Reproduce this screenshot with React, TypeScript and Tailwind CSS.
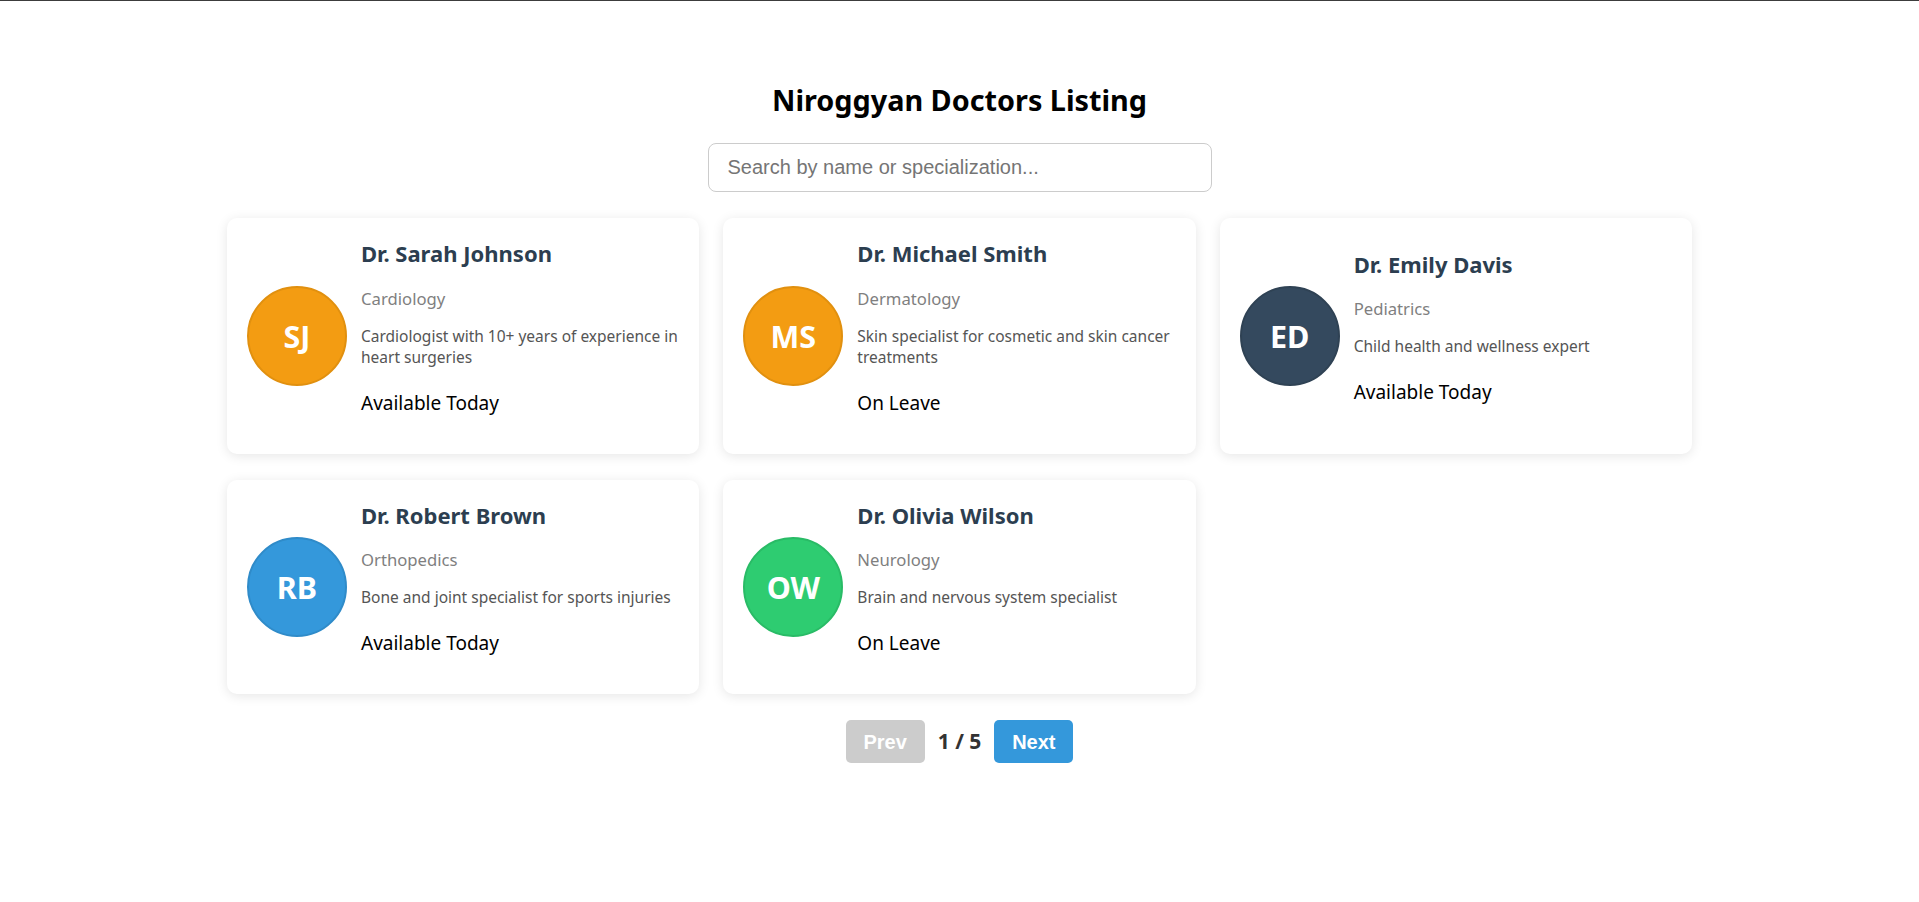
import React from "react";

type Doctor = {
  initials: string;
  name: string;
  spec: string;
  desc: string;
  status: string;
  avatar: string;
};

const doctors: Doctor[] = [
  {
    initials: "SJ",
    name: "Dr. Sarah Johnson",
    spec: "Cardiology",
    desc: "Cardiologist with 10+ years of experience in heart surgeries",
    status: "Available Today",
    avatar: "bg-[#f39c12] border-[#e1900f]",
  },
  {
    initials: "MS",
    name: "Dr. Michael Smith",
    spec: "Dermatology",
    desc: "Skin specialist for cosmetic and skin cancer treatments",
    status: "On Leave",
    avatar: "bg-[#f39c12] border-[#e1900f]",
  },
  {
    initials: "ED",
    name: "Dr. Emily Davis",
    spec: "Pediatrics",
    desc: "Child health and wellness expert",
    status: "Available Today",
    avatar: "bg-[#34495e] border-[#2f4254]",
  },
  {
    initials: "RB",
    name: "Dr. Robert Brown",
    spec: "Orthopedics",
    desc: "Bone and joint specialist for sports injuries",
    status: "Available Today",
    avatar: "bg-[#3498db] border-[#2f8bc9]",
  },
  {
    initials: "OW",
    name: "Dr. Olivia Wilson",
    spec: "Neurology",
    desc: "Brain and nervous system specialist",
    status: "On Leave",
    avatar: "bg-[#2ecc71] border-[#29bb66]",
  },
];

function DoctorCard({ d }: { d: Doctor }) {
  return (
    <div className="flex items-center gap-[14px] rounded-[10px] bg-white py-5 pl-5 pr-4 shadow-[0_2px_12px_rgba(0,0,0,0.1)]">
      <div
        className={`flex h-[100px] w-[100px] shrink-0 items-center justify-center rounded-full border-2 ${d.avatar}`}
      >
        <span className="text-[30.5px] font-bold leading-none text-white">{d.initials}</span>
      </div>
      <div className="mb-[18px] flex min-w-0 flex-1 flex-col">
        <h3 className="text-[22px] font-bold leading-[31px] text-[#2c3e50]">{d.name}</h3>
        <p className="mt-[17.5px] text-[16.7px] leading-[24px] text-[#7f7f7f]">{d.spec}</p>
        <p className="mt-[15px] text-[15.5px] leading-[21px] text-[#555555]">{d.desc}</p>
        <p className="mt-[22px] text-[19px] leading-[26px] text-[#000000]">{d.status}</p>
      </div>
    </div>
  );
}

export default function App() {
  return (
    <div
      className="min-h-[902px] w-full border-t border-[#3c3c3c] bg-white pt-[81px]"
      style={{ fontFamily: '"Noto Sans", "Open Sans", sans-serif' }}
    >
      <h1 className="text-center text-[28.8px] font-bold leading-[36px] text-black">
        Niroggyan Doctors Listing
      </h1>
      <div className="mt-[25px] flex justify-center">
        <input
          type="text"
          placeholder="Search by name or specialization..."
          className="h-[49px] w-[504px] rounded-[8px] border border-[#cccccc] px-[19px] text-[20px] text-[#333] outline-none placeholder:text-[#757575]"
          style={{ fontFamily: '"Liberation Sans", Arial, sans-serif' }}
        />
      </div>
      <div className="mx-auto mt-[26px] grid w-[1465px] grid-cols-3 gap-x-6 gap-y-[26px]">
        {doctors.map((d) => (
          <DoctorCard key={d.initials} d={d} />
        ))}
      </div>
      <div className="mt-[26px] flex items-center justify-center gap-[13px]">
        <button
          className="h-[43px] w-[79px] rounded-[5px] bg-[#cccccc] text-[20px] font-bold text-white"
          style={{ fontFamily: '"Liberation Sans", Arial, sans-serif' }}
        >
          Prev
        </button>
        <span className="text-[21px] font-bold text-[#333333]">1 / 5</span>
        <button
          className="h-[43px] w-[79px] rounded-[5px] bg-[#3498db] text-[20px] font-bold text-white"
          style={{ fontFamily: '"Liberation Sans", Arial, sans-serif' }}
        >
          Next
        </button>
      </div>
    </div>
  );
}
